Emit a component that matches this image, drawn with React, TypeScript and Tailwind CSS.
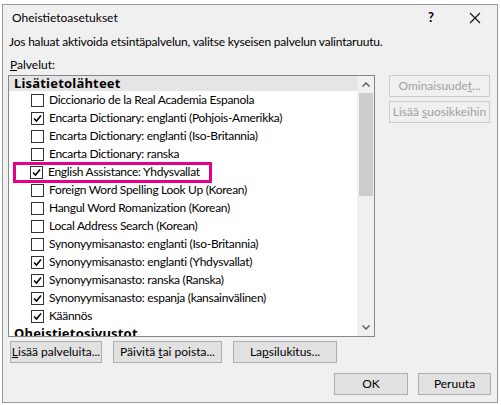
import React from 'react';

const font = { fontFamily: 'Lato, "Noto Sans", sans-serif' };
const headFont = { fontFamily: '"Noto Sans", sans-serif' };

const rows: { label: string; checked: boolean; highlight?: boolean }[] = [
  { label: 'Diccionario de la Real Academia Espanola', checked: false },
  { label: 'Encarta Dictionary: englanti (Pohjois-Amerikka)', checked: true },
  { label: 'Encarta Dictionary: englanti (Iso-Britannia)', checked: false },
  { label: 'Encarta Dictionary: ranska', checked: false },
  { label: 'English Assistance: Yhdysvallat', checked: true, highlight: true },
  { label: 'Foreign Word Spelling Look Up (Korean)', checked: false },
  { label: 'Hangul Word Romanization (Korean)', checked: false },
  { label: 'Local Address Search (Korean)', checked: false },
  { label: 'Synonyymisanasto: englanti (Iso-Britannia)', checked: false },
  { label: 'Synonyymisanasto: englanti (Yhdysvallat)', checked: true },
  { label: 'Synonyymisanasto: ranska (Ranska)', checked: true },
  { label: 'Synonyymisanasto: espanja (kansainvälinen)', checked: true },
  { label: 'Käännös', checked: true },
];

function CheckBox({ checked }: { checked: boolean }) {
  return (
    <div className="w-[13px] h-[13px] border border-[#333333] bg-white flex items-center justify-center shrink-0">
      {checked && (
        <svg width="9" height="9" viewBox="0 0 9 9">
          <path d="M1 4.5 L3.5 7 L8 1.5" stroke="#000" strokeWidth="1.6" fill="none" />
        </svg>
      )}
    </div>
  );
}

function Btn({ children, w, disabled }: { children: React.ReactNode; w: string; disabled?: boolean }) {
  return (
    <div
      className={
        disabled
          ? `${w} h-[22px] border border-[#cccccc] bg-[#f0f0f0] text-[#a0a0a0] flex items-center justify-center text-[12px] whitespace-nowrap`
          : `${w} h-[22px] border border-[#adadad] bg-[#e1e1e1] text-black flex items-center justify-center text-[12px] whitespace-nowrap`
      }
    >
      {children}
    </div>
  );
}

export default function App() {
  return (
    <div className="w-[501px] h-[405px] bg-white pl-[2px] pt-[4px]" style={font}>
      <div className="w-[496px] h-[399px] border border-[#9a9a9a] bg-[#f0f0f0] flex flex-col">
        {/* Title bar */}
        <div className="h-[26px] flex items-center pl-[9px] text-[12px] text-black">
          <span className="flex-1">Oheistietoasetukset</span>
          <span className="w-[20px] text-center font-bold text-[13px] mr-[28px]">?</span>
          <svg width="12" height="12" viewBox="0 0 12 12" className="mr-[16px]">
            <path d="M1 1 L11 11 M11 1 L1 11" stroke="#111" strokeWidth="1.1" />
          </svg>
        </div>

        <div className="pl-[6px] pt-[3px] text-[12px] text-black leading-[16px] tracking-[-0.2px]">
          Jos haluat aktivoida etsintäpalvelun, valitse kyseisen palvelun valintaruutu.
        </div>
        <div className="pl-[7px] mt-[7px] text-[12px] text-black leading-[16px]">
          <span className="underline">P</span>alvelut:
        </div>

        <div className="flex mt-[2px] pl-[5px]">
          {/* List box */}
          <div className="w-[367px] h-[262px] border border-[#828790] bg-white flex overflow-hidden">
            <div className="flex-1 flex flex-col text-[12px] text-black">
              <div
                className="h-[15px] bg-[#e5e5e5] font-bold text-[13px] tracking-[0.2px] pl-[5px] leading-[15px] shrink-0"
                style={headFont}
              >
                Lisätietolähteet
              </div>
              {rows.map((r, i) => (
                <div key={i} className="h-[18px] flex items-center shrink-0 pl-[5px]">
                  <div
                    className={
                      r.highlight
                        ? 'h-[21px] w-[199px] border-[3px] border-[#e3008c] flex items-center pl-[14px] gap-[5px] -ml-[1px]'
                        : 'flex items-center pl-[17px] gap-[5px]'
                    }
                  >
                    <CheckBox checked={r.checked} />
                    <span className="leading-[16px] whitespace-nowrap tracking-[-0.3px]">{r.label}</span>
                  </div>
                </div>
              ))}
              <div
                className="h-[16px] font-bold text-[13px] tracking-[0.2px] pl-[5px] leading-[16px] shrink-0"
                style={headFont}
              >
                Oheistietosivustot
              </div>
            </div>
            {/* Scrollbar */}
            <div className="w-[17px] bg-[#f0f0f0] flex flex-col items-center shrink-0">
              <div className="h-[17px] flex items-center justify-center">
                <svg width="8" height="5" viewBox="0 0 8 5">
                  <path d="M0.5 4.5 L4 1 L7.5 4.5" stroke="#606060" strokeWidth="1.5" fill="none" />
                </svg>
              </div>
              <div className="w-[14px] h-[103px] bg-[#cdcdcd]" />
              <div className="flex-1" />
              <div className="h-[17px] flex items-center justify-center">
                <svg width="8" height="5" viewBox="0 0 8 5">
                  <path d="M0.5 0.5 L4 4 L7.5 0.5" stroke="#606060" strokeWidth="1.5" fill="none" />
                </svg>
              </div>
            </div>
          </div>

          {/* Right-side buttons */}
          <div className="ml-[14px] flex flex-col gap-[4px]">
            <Btn w="w-[101px]" disabled>
              <span>
                Ominaisuude<span className="underline">t</span>...
              </span>
            </Btn>
            <Btn w="w-[101px]" disabled>
              <span>
                Lisää <span className="underline">s</span>uosikkeihin
              </span>
            </Btn>
          </div>
        </div>

        <div className="flex pl-[7px] mt-[4px] gap-[11px]">
          <Btn w="w-[92px]">
            <span>
              <span className="underline">L</span>isää palveluita...
            </span>
          </Btn>
          <Btn w="w-[109px]">
            <span>
              Päivitä <span className="underline">t</span>ai poista...
            </span>
          </Btn>
          <Btn w="w-[104px]">
            <span>
              La<span className="underline">p</span>silukitus...
            </span>
          </Btn>
        </div>

        <div className="flex justify-end pr-[6px] mt-[10px] gap-[10px]">
          <Btn w="w-[74px]">OK</Btn>
          <Btn w="w-[73px]">Peruuta</Btn>
        </div>
      </div>
    </div>
  );
}
